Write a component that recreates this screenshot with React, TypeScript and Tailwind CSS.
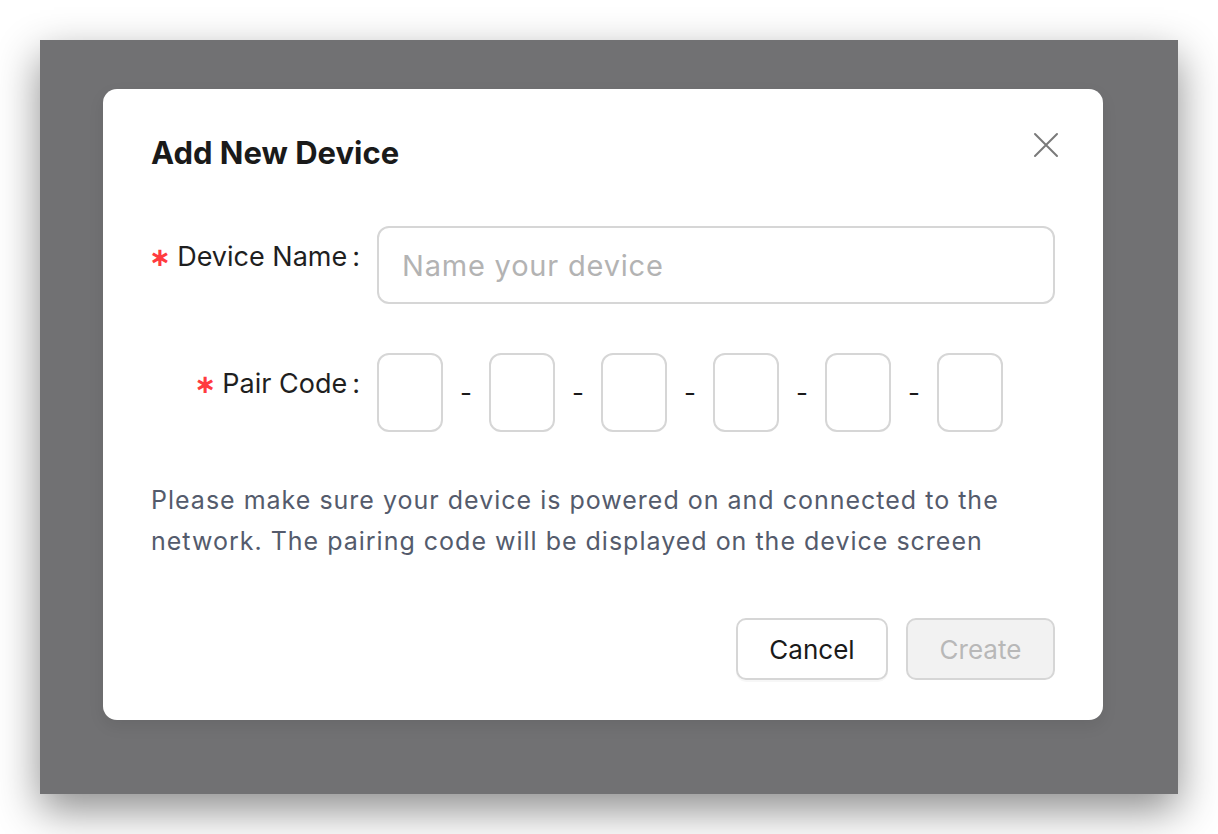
import React from "react";

const font = { fontFamily: "Inter, 'Noto Sans', sans-serif" };

function Label({ text }: { text: string }) {
  return (
    <div className="w-[226px] shrink-0 flex justify-end items-center pr-[17px] mt-[11px] h-[40px] text-[27px] text-[#1f1f1f] whitespace-nowrap">
      <span className="text-[#ff3b3f] mr-[6px] text-[26px] font-bold font-['DejaVu_Sans']">∗</span>
      <span>{text}</span>
      <span className="ml-[5px]">:</span>
    </div>
  );
}

export default function App() {
  const boxes = [0, 1, 2, 3, 4, 5];

  return (
    <div className="w-[1218px] h-[834px] bg-white pt-[40px] pl-[40px]" style={font}>
      <div className="w-[1138px] h-[754px] bg-[#717173] shadow-[0_16px_40px_rgba(0,0,0,0.45)] pt-[49px] pl-[63px]">
        <div className="w-[1000px] h-[631px] bg-white rounded-[14px] shadow-[0_6px_16px_rgba(0,0,0,0.08)] px-[48px] pt-[43px] pb-[40px] flex flex-col">
          {/* header */}
          <div className="flex justify-between items-start">
            <h1 className="text-[31px] leading-[40px] font-bold text-[#1a1a1a] mt-[1px]">
              Add New Device
            </h1>
            <button className="w-[26px] h-[26px] -mr-[4px] flex items-center justify-center">
              <svg width="26" height="26" viewBox="0 0 26 26">
                <path d="M2 2 L24 24 M24 2 L2 24" stroke="#7a7a7a" strokeWidth="2" strokeLinecap="round" />
              </svg>
            </button>
          </div>

          {/* device name */}
          <div className="flex items-start mt-[53px]">
            <Label text="Device Name" />
            <div className="flex-1 h-[78px] border-2 border-[#d6d6d6] rounded-[12px] flex items-center pl-[23px] pt-[2px] text-[29px] tracking-[0.8px] text-[#b3b3b3]">
              Name your device
            </div>
          </div>

          {/* pair code */}
          <div className="flex items-start mt-[49px]">
            <Label text="Pair Code" />
            <div className="flex items-center">
              {boxes.map((b) => (
                <div key={b} className="flex items-center">
                  {b > 0 && (
                    <div className="w-[46px] flex justify-center text-[26px] text-[#1a1a1a]">-</div>
                  )}
                  <div className="w-[66px] h-[79px] border-2 border-[#d6d6d6] rounded-[12px]" />
                </div>
              ))}
            </div>
          </div>

          {/* hint */}
          <p className="mt-[48px] text-[25px] leading-[41px] tracking-[1px] text-[#545b6c]">
            Please make sure your device is powered on and connected to the
            <br />
            network. The pairing code will be displayed on the device screen
          </p>

          {/* footer */}
          <div className="mt-auto flex justify-end gap-[18px]">
            <button className="w-[152px] h-[62px] border-2 border-[#d6d6d6] rounded-[10px] bg-white text-[26px] text-[#1a1a1a] shadow-[0_2px_0_rgba(0,0,0,0.03)]">
              Cancel
            </button>
            <button className="w-[149px] h-[62px] border-2 border-[#d6d6d6] rounded-[10px] bg-[#f2f2f2] text-[26px] text-[#b8b8b8]">
              Create
            </button>
          </div>
        </div>
      </div>
    </div>
  );
}
